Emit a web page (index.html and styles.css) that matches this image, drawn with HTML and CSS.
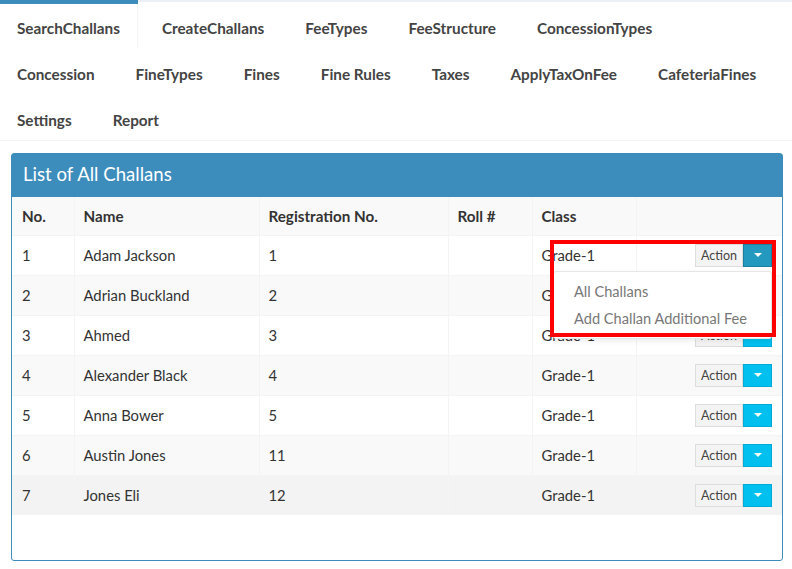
FILE: index.html
```html
<!DOCTYPE html>
<html>
<head>
<meta charset="utf-8">
<link rel="stylesheet" href="styles.css">
</head>
<body>
<div class="page">
  <ul class="tabs">
    <li class="tab active"><a>SearchChallans</a></li>
    <li class="tab"><a>CreateChallans</a></li>
    <li class="tab"><a>FeeTypes</a></li>
    <li class="tab"><a>FeeStructure</a></li>
    <li class="tab"><a>ConcessionTypes</a></li>
    <li class="break"></li>
    <li class="tab"><a>Concession</a></li>
    <li class="tab"><a>FineTypes</a></li>
    <li class="tab"><a>Fines</a></li>
    <li class="tab"><a>Fine Rules</a></li>
    <li class="tab"><a>Taxes</a></li>
    <li class="tab"><a>ApplyTaxOnFee</a></li>
    <li class="tab"><a>CafeteriaFines</a></li>
    <li class="break"></li>
    <li class="tab"><a>Settings</a></li>
    <li class="tab"><a>Report</a></li>
  </ul>

  <div class="content">
    <div class="panel">
      <div class="panel-head">List of All Challans</div>
      <div class="panel-body">
        <table class="grid">
          <colgroup>
            <col class="c1"><col class="c2"><col class="c3"><col class="c4"><col class="c5"><col class="c6">
          </colgroup>
          <tr class="head">
            <th>No.</th><th>Name</th><th>Registration No.</th><th>Roll #</th><th>Class</th><th></th>
          </tr>
          <tr>
            <td>1</td><td>Adam Jackson</td><td>1</td><td></td><td>Grade-1</td>
            <td class="act">
              <div class="btn-group open">
                <span class="btn">Action</span><span class="btn toggle active"><i class="caret"></i></span>
                <ul class="menu">
                  <li>All Challans</li>
                  <li>Add Challan Additional Fee</li>
                </ul>
              </div>
            </td>
          </tr>
          <tr class="odd">
            <td>2</td><td>Adrian Buckland</td><td>2</td><td></td><td>Grade-1</td>
            <td class="act"><div class="btn-group"><span class="btn">Action</span><span class="btn toggle"><i class="caret"></i></span></div></td>
          </tr>
          <tr>
            <td>3</td><td>Ahmed</td><td>3</td><td></td><td>Grade-1</td>
            <td class="act"><div class="btn-group"><span class="btn">Action</span><span class="btn toggle"><i class="caret"></i></span></div></td>
          </tr>
          <tr class="odd">
            <td>4</td><td>Alexander Black</td><td>4</td><td></td><td>Grade-1</td>
            <td class="act"><div class="btn-group"><span class="btn">Action</span><span class="btn toggle"><i class="caret"></i></span></div></td>
          </tr>
          <tr>
            <td>5</td><td>Anna Bower</td><td>5</td><td></td><td>Grade-1</td>
            <td class="act"><div class="btn-group"><span class="btn">Action</span><span class="btn toggle"><i class="caret"></i></span></div></td>
          </tr>
          <tr class="odd">
            <td>6</td><td>Austin Jones</td><td>11</td><td></td><td>Grade-1</td>
            <td class="act"><div class="btn-group"><span class="btn">Action</span><span class="btn toggle"><i class="caret"></i></span></div></td>
          </tr>
          <tr class="hover">
            <td>7</td><td>Jones Eli</td><td>12</td><td></td><td>Grade-1</td>
            <td class="act"><div class="btn-group"><span class="btn">Action</span><span class="btn toggle"><i class="caret"></i></span></div></td>
          </tr>
        </table>
      </div>
    </div>
  </div>
  <div class="highlight"></div>
</div>
</body>
</html>
```

FILE: styles.css
```css
html, body {
  margin: 0;
  padding: 0;
  background: #fff;
}
body {
  font-family: Lato, "Liberation Sans", sans-serif;
  color: #333;
}
.page {
  position: relative;
  width: 792px;
  height: 569px;
  overflow: hidden;
}
.tabs {
  list-style: none;
  margin: 0;
  padding: 0;
  display: flex;
  flex-wrap: wrap;
  border-top: 2px solid #ecf0f5;
  border-bottom: 1px solid #f4f4f4;
}
.tab {
  position: relative;
  height: 46px;
  box-sizing: border-box;
  margin-right: 7px;
  padding-top: 16px;
}
.tab a {
  display: block;
  padding: 0 17px;
  line-height: 20px;
  font-size: 15.3px;
  font-weight: bold;
  color: #444;
}
.tab.active {
  border-right: 1px solid #f4f4f4;
}
.tab.active::before {
  content: "";
  position: absolute;
  top: -2px;
  left: 0;
  right: -1px;
  height: 4px;
  background: #3c8dbc;
}
.break {
  flex-basis: 100%;
  height: 0;
}
.content {
  padding: 12px 9px 0 11px;
}
.panel {
  border: 1px solid #3c8dbc;
  border-radius: 3px;
  width: 772px;
  box-sizing: border-box;
}
.panel-head {
  background: #3c8dbc;
  color: #fff;
  font-size: 18.6px;
  height: 43px;
  line-height: 41px;
  padding-left: 11px;
}
.panel-body {
  padding-bottom: 45px;
}
.grid {
  width: 100%;
  border-collapse: collapse;
  table-layout: fixed;
  font-size: 14.8px;
}
.c1 { width: 62px; }
.c2 { width: 185px; }
.c3 { width: 189px; }
.c4 { width: 84px; }
.c5 { width: 104px; }
.c6 { width: 146px; }
.grid th, .grid td {
  text-align: left;
  padding: 0 10px 0 9px;
  height: 40px;
  border-top: 1px solid #f4f4f4;
  border-left: 1px solid #f4f4f4;
  box-sizing: border-box;
}
.grid th:first-child, .grid td:first-child {
  border-left: none;
  padding-left: 10px;
}
.grid tr.head th {
  height: 38px;
  border-top: none;
  font-weight: bold;
  font-size: 15.2px;
  color: #333;
}
.grid tr.head, .grid tr.odd {
  background: #f9f9f9;
}
.grid tr.hover {
  background: #f3f3f3;
}
.grid td.act {
  text-align: right;
  padding-right: 10px;
}
.btn-group {
  position: relative;
  display: inline-flex;
  vertical-align: middle;
}
.btn {
  display: inline-flex;
  align-items: center;
  justify-content: center;
  height: 23px;
  box-sizing: border-box;
  font-size: 12.5px;
  color: #444;
  background: #f4f4f4;
  border: 1px solid #ddd;
  padding: 0 5px;
}
.btn.toggle {
  width: 29px;
  background: #00c0ef;
  border-color: #00acd6;
}
.btn.toggle.active {
  background: #2399bf;
  border-color: #1a7fa0;
}
.caret {
  width: 0;
  height: 0;
  border-top: 4px solid #fff;
  border-left: 4px solid transparent;
  border-right: 4px solid transparent;
}
.menu {
  position: absolute;
  top: 27px;
  right: 0;
  width: 217px;
  margin: 0;
  padding: 6px 0;
  list-style: none;
  background: #fff;
  border: 1px solid #e6e6e6;
  border-radius: 3px;
  box-shadow: 0 2px 6px rgba(0,0,0,0.08);
  text-align: left;
  z-index: 2;
}
.menu li {
  padding: 0 20px;
  line-height: 27px;
  font-size: 14.6px;
  color: #777;
  white-space: nowrap;
}
.highlight {
  position: absolute;
  left: 550px;
  top: 240px;
  width: 226px;
  height: 97px;
  box-sizing: border-box;
  border: 4px solid #ff0000;
  z-index: 5;
  pointer-events: none;
}
```
